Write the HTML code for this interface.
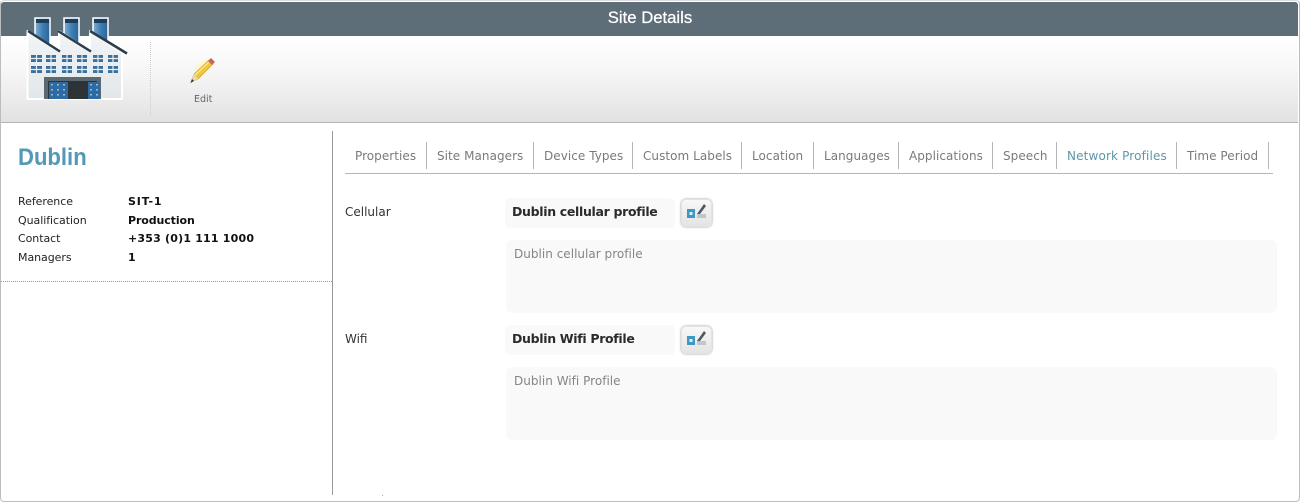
<!DOCTYPE html>
<html><head><meta charset="utf-8"><style>
html,body{margin:0;padding:0;background:#fff}
#p{position:relative;width:1300px;height:502px;overflow:hidden;background:#fff;font-family:"DejaVu Sans","Liberation Sans",sans-serif}
#p div{position:absolute;white-space:nowrap}
.l{left:18px;font-size:11px;color:#222;line-height:14px;letter-spacing:-.05px}
.v{left:128px;font-size:11px;font-weight:bold;color:#111;line-height:14px;letter-spacing:-.1px}
.t{top:148px;font-size:12px;line-height:16px;color:#7a7a7a;letter-spacing:.05px}
.s{top:142px;width:1px;height:27px;background:#b5b5b5}
.f{left:345px;font-size:12px;color:#333;line-height:16px}
.n{left:505px;width:170px;height:30px;background:#f9f9f9;border-radius:5px}
.b{left:512px;font-size:12.5px;font-weight:bold;color:#2b2b2b;line-height:16px;letter-spacing:-.32px}
.d{left:506px;width:771px;height:73px;background:#f9f9f9;border-radius:6px}
.g{left:514px;font-size:12px;color:#858585;line-height:16px;letter-spacing:.02px}
.e{left:681px;width:29px;height:26px;border:1px solid #e2e2e2;border-radius:5px;background:linear-gradient(#f8f8f8,#e4e4e4);box-shadow:0 0 2px #999}
</style></head><body><div id="p">
<div style="left:1px;top:2px;width:1297px;height:34px;background:#5e6e79;border-radius:3px 3px 0 0"></div>
<div style="left:0;top:8px;width:1300px;text-align:center;font:16.7px/20px 'Liberation Sans',sans-serif;color:#fff;-webkit-text-stroke:.25px #fff">Site Details</div>
<div style="left:1px;top:36px;width:1297px;height:86px;background:linear-gradient(#fff 0%,#f8f8f8 35%,#e2e2e2 100%)"></div>
<div style="left:1px;top:122px;width:1297px;height:1px;background:#b4b4b4"></div>
<div style="left:150px;top:42px;width:0;height:73px;border-left:1px dotted #ccc"></div>

<svg style="position:absolute;left:0;top:0" width="140" height="110" viewBox="0 0 140 110">
<defs><linearGradient id="c" x1="0" x2="1" y1="0" y2="0"><stop offset="0" stop-color="#7fb0d6"/><stop offset=".5" stop-color="#3f7fb5"/><stop offset="1" stop-color="#2a6298"/></linearGradient>
<linearGradient id="w" x1="0" x2="0" y1="0" y2="1"><stop offset="0" stop-color="#f2f4f6"/><stop offset="1" stop-color="#e2e7ea"/></linearGradient></defs>
<g stroke="#fff" stroke-width="1.5" fill="url(#c)">
<rect x="35" y="18" width="15" height="28"/>
<rect x="64" y="18" width="15" height="28"/>
<rect x="93" y="18" width="15" height="28"/>
</g>
<g fill="#1d3e58"><rect x="36" y="19" width="13" height="4"/><rect x="65" y="19" width="13" height="4"/><rect x="94" y="19" width="13" height="4"/></g>
<path d="M27.500 31 L59 51 L59 31 L90 51 L90 31 L122 53 L122 99 L27.500 99Z" fill="url(#w)" stroke="#fff" stroke-width="2" stroke-linejoin="round"/>
<path d="M28 31 L60 51.500M58 31 L91 51.500M90 31 L127 53.500" stroke="#2c3c48" stroke-width="2.500" fill="none"/>
<g fill="#3a6f9e">
<rect x="31" y="55" width="11" height="7"/><rect x="46" y="55" width="10" height="7"/><rect x="62" y="55" width="10" height="7"/><rect x="77" y="55" width="10" height="7"/><rect x="93" y="55" width="10" height="7"/><rect x="108" y="55" width="10" height="7"/>
<rect x="31" y="66" width="11" height="7"/><rect x="46" y="66" width="10" height="7"/><rect x="62" y="66" width="10" height="7"/><rect x="77" y="66" width="10" height="7"/><rect x="93" y="66" width="10" height="7"/><rect x="108" y="66" width="10" height="7"/>
</g>
<g stroke="#e8eef2" stroke-width="1.200"><path d="M31 58.500h87M31 69.500h87M36.500 55v7M36.500 66v7M51 55v7M51 66v7M67 55v7M67 66v7M82 55v7M82 66v7M98 55v7M98 66v7M113 55v7M113 66v7"/></g>
<rect x="44" y="77" width="57" height="22" fill="#5c6872"/>
<rect x="48" y="81" width="49" height="18" fill="#2e3338"/>
<rect x="49" y="82" width="19" height="17" fill="#2d6ca3"/><rect x="88" y="82" width="12" height="17" fill="#2d6ca3"/>
<path d="M52 84v14M58 84v14M64 84v14M91 84v14M97 84v14" stroke="#bcd6ea" stroke-width="1.500" stroke-dasharray="1.500 3.500"/>
</svg>

<svg style="position:absolute;left:187px;top:55px" width="32" height="32" viewBox="0 0 32 32">
<path d="M8 11 L21 3 L24 12 L10 24Z" fill="#fdf3b0" opacity=".5"/>
<path d="M4 27 L7 19 L22 5 L26 9 L11 24Z" fill="#f0c63c" stroke="#c79a2a" stroke-width=".6"/>
<path d="M8 20 L23 6" stroke="#fbe98c" stroke-width="1.500"/>
<path d="M21 6 L24 3 L28 7 L25 10Z" fill="#c8665c"/>
<path d="M4 27 L7 19 L11 24Z" fill="#e8d9b5"/><path d="M3.500 28 L5 24 L7 26Z" fill="#333"/>
</svg>
<div style="left:194px;top:93px;font-size:9.5px;line-height:13px;color:#666">Edit</div>

<div style="left:18px;top:143px;font:bold 24px/30px 'Liberation Sans',sans-serif;color:#5498b7;transform:scaleX(.92);transform-origin:0 0">Dublin</div>
<div class="l" style="top:195px">Reference</div><div class="v" style="top:195px;letter-spacing:.85px">SIT-1</div>
<div class="l" style="top:214px">Qualification</div><div class="v" style="top:214px">Production</div>
<div class="l" style="top:232px">Contact</div><div class="v" style="top:232px;letter-spacing:.2px">+353 (0)1 111 1000</div>
<div class="l" style="top:251px">Managers</div><div class="v" style="top:251px">1</div>
<div style="left:1px;top:281px;width:331px;border-top:1px dotted #999"></div>
<div style="left:332px;top:131px;width:1px;height:364px;background:#999"></div>
<div style="left:382px;top:495px;width:1px;height:1px;background:#aaa"></div>

<div class="t" style="left:355px">Properties</div><div class="s" style="left:426px"></div>
<div class="t" style="left:437px">Site Managers</div><div class="s" style="left:533px"></div>
<div class="t" style="left:544px">Device Types</div><div class="s" style="left:632px"></div>
<div class="t" style="left:643px">Custom Labels</div><div class="s" style="left:741px"></div>
<div class="t" style="left:752px">Location</div><div class="s" style="left:813px"></div>
<div class="t" style="left:824px">Languages</div><div class="s" style="left:898px"></div>
<div class="t" style="left:909px">Applications</div><div class="s" style="left:992px"></div>
<div class="t" style="left:1003px">Speech</div><div class="s" style="left:1056px"></div>
<div class="t" style="left:1067px;color:#5e96a8;letter-spacing:.15px">Network Profiles</div><div class="s" style="left:1176px"></div>
<div class="t" style="left:1187px">Time Period</div><div class="s" style="left:1268px"></div>
<div style="left:345px;top:173px;width:928px;height:1px;background:#b5b5b5"></div>

<div class="f" style="top:204px">Cellular</div>
<div class="n" style="top:198px"></div><div class="b" style="top:204px">Dublin cellular profile</div>
<div class="e" style="top:199px"></div>
<svg style="position:absolute;left:685px;top:203px" width="22" height="20" viewBox="0 0 22 20"><rect x="2" y="6" width="8" height="9" fill="#3f97c4"/><rect x="4.500" y="9" width="3" height="3" fill="#dfeef6"/><path d="M12 11 L19 1 L21 3 L15 11Z" fill="#4d5a66"/><path d="M12 12h9M12 14h9" stroke="#a9b0b5" stroke-width="1.300"/></svg>
<div class="d" style="top:240px"></div><div class="g" style="top:246px">Dublin cellular profile</div>

<div class="f" style="top:331px">Wifi</div>
<div class="n" style="top:325px"></div><div class="b" style="top:331px">Dublin Wifi Profile</div>
<div class="e" style="top:326px"></div>
<svg style="position:absolute;left:685px;top:330px" width="22" height="20" viewBox="0 0 22 20"><rect x="2" y="6" width="8" height="9" fill="#3f97c4"/><rect x="4.500" y="9" width="3" height="3" fill="#dfeef6"/><path d="M12 11 L19 1 L21 3 L15 11Z" fill="#4d5a66"/><path d="M12 12h9M12 14h9" stroke="#a9b0b5" stroke-width="1.300"/></svg>
<div class="d" style="top:367px"></div><div class="g" style="top:373px">Dublin Wifi Profile</div>

<div style="left:0;top:0;width:1298px;height:500px;border:1px solid #bdbdbd;border-top-color:#ddd;border-radius:4px;box-sizing:content-box"></div>
</div></body></html>
